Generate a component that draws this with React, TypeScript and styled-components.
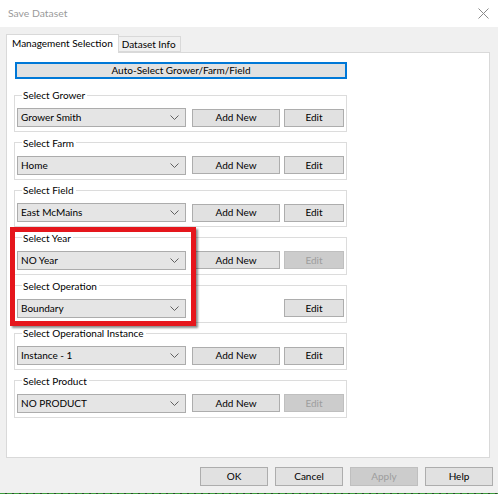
import styled, { createGlobalStyle } from 'styled-components';

const GlobalStyle = createGlobalStyle`
  html, body {
    margin: 0;
    padding: 0;
    background: #ffffff;
  }
  body {
    font-family: Lato, "Noto Sans", "Liberation Sans", sans-serif;
    font-size: 10px;
    color: #000;
  }
`;

type Group = {
  label: string;
  value: string;
  addNew: boolean;
  editEnabled: boolean;
};

const groups: Group[] = [
  { label: 'Select Grower', value: 'Grower Smith', addNew: true, editEnabled: true },
  { label: 'Select Farm', value: 'Home', addNew: true, editEnabled: true },
  { label: 'Select Field', value: 'East McMains', addNew: true, editEnabled: true },
  { label: 'Select Year', value: 'NO Year', addNew: true, editEnabled: false },
  { label: 'Select Operation', value: 'Boundary', addNew: false, editEnabled: true },
  { label: 'Select Operational Instance', value: 'Instance - 1', addNew: true, editEnabled: true },
  { label: 'Select Product', value: 'NO PRODUCT', addNew: true, editEnabled: false },
];

function Chevron() {
  return (
    <svg width="9" height="5" viewBox="0 0 9 5">
      <polyline points="0.5,0.5 4.5,4.5 8.5,0.5" fill="none" stroke="#606060" strokeWidth="1" />
    </svg>
  );
}

function CloseIcon() {
  return (
    <svg width="11" height="11" viewBox="0 0 11 11">
      <path d="M0.5 0.5 L10.5 10.5 M10.5 0.5 L0.5 10.5" stroke="#8a8a8a" strokeWidth="1" />
    </svg>
  );
}

export default function App() {
  return (
    <Window>
      <GlobalStyle />
      <TitleBar>
        <Title>Save Dataset</Title>
        <CloseIcon />
      </TitleBar>
      <Body>
        <Tabs>
          <Tab $active>Management Selection</Tab>
          <Tab>Dataset Info</Tab>
        </Tabs>
        <Panel>
          <AutoButton>Auto-Select Grower/Farm/Field</AutoButton>
          <Groups>
            {groups.map((g) => (
              <GroupBox key={g.label}>
                <Legend>{g.label}</Legend>
                <Row>
                  <Combo>
                    <span>{g.value}</span>
                    <Chevron />
                  </Combo>
                  {g.addNew && <Button $width={88}>Add New</Button>}
                  <EditButton $width={60} $disabled={!g.editEnabled}>
                    Edit
                  </EditButton>
                </Row>
              </GroupBox>
            ))}
          </Groups>
        </Panel>
        <Footer>
          <Button $width={68} $height={19}>OK</Button>
          <Button $width={68} $height={19}>Cancel</Button>
          <Button $width={68} $height={19} $disabled>Apply</Button>
          <Button $width={68} $height={19}>Help</Button>
        </Footer>
      </Body>
      <DottedEdge />
      <Highlight />
    </Window>
  );
}

const Window = styled.div`
  position: relative;
  width: 498px;
  height: 494px;
  display: flex;
  flex-direction: column;
  overflow: hidden;
`;

const TitleBar = styled.div`
  height: 27px;
  flex: none;
  background: #ffffff;
  display: flex;
  align-items: center;
  justify-content: space-between;
  padding: 0 9px 1px 8px;
  box-sizing: border-box;
`;

const Title = styled.div`
  color: #9a9a9a;
  font-size: 10.4px;
`;

const Body = styled.div`
  flex: 1;
  background: #f0f0f0;
  display: flex;
  flex-direction: column;
  padding: 7px 8px 0 6px;
`;

const Tabs = styled.div`
  display: flex;
  align-items: flex-end;
  height: 18px;
  position: relative;
  z-index: 1;
`;

const Tab = styled.div<{ $active?: boolean }>`
  box-sizing: border-box;
  height: ${(p) => (p.$active ? '19px' : '16px')};
  margin-bottom: ${(p) => (p.$active ? '-1px' : '0')};
  padding: ${(p) => (p.$active ? '1px 5px 0 5px' : '0 4px 0 3px')};
  background: ${(p) => (p.$active ? '#ffffff' : '#f0f0f0')};
  border: 1px solid #d9d9d9;
  border-bottom: ${(p) => (p.$active ? 'none' : '1px solid #d9d9d9')};
  border-left: ${(p) => (p.$active ? '1px solid #d9d9d9' : 'none')};
  white-space: nowrap;
  line-height: 15px;
`;

const Panel = styled.div`
  box-sizing: border-box;
  height: 406px;
  background: #ffffff;
  border: 1px solid #d9d9d9;
  padding: 9px 0 0 7px;
  display: flex;
  flex-direction: column;
`;

const AutoButton = styled.div`
  box-sizing: border-box;
  width: 332px;
  height: 17px;
  margin-left: 1px;
  background: #e1e1e1;
  border: 2px solid #0078d7;
  display: flex;
  align-items: center;
  justify-content: center;
  line-height: 13px;
`;

const Groups = styled.div`
  display: flex;
  flex-direction: column;
  gap: 2.67px;
  margin-top: 8px;
`;

const GroupBox = styled.fieldset`
  box-sizing: border-box;
  width: 333px;
  margin: 0;
  padding: 0 2px 4px 2px;
  border: 1px solid #dcdcdc;
  min-inline-size: 0;
`;

const Legend = styled.legend`
  margin-left: 5px;
  padding: 0 2px 0 1px;
  line-height: 16px;
  height: 16px;
`;

const Row = styled.div`
  display: flex;
  align-items: center;
  margin-top: 5px;
`;

const Combo = styled.div`
  box-sizing: border-box;
  width: 169px;
  height: 19px;
  margin-right: 6px;
  background: #e5e5e5;
  border: 1px solid #acacac;
  display: flex;
  align-items: center;
  justify-content: space-between;
  padding: 0 6px 0 3px;
  line-height: 15px;
`;

const Button = styled.div<{ $width: number; $height?: number; $disabled?: boolean }>`
  box-sizing: border-box;
  width: ${(p) => p.$width}px;
  height: ${(p) => p.$height ?? 18}px;
  background: ${(p) => (p.$disabled ? '#cccccc' : '#e1e1e1')};
  border: 1px solid ${(p) => (p.$disabled ? '#bfbfbf' : '#adadad')};
  color: ${(p) => (p.$disabled ? '#9d9d9d' : '#000000')};
  display: flex;
  align-items: center;
  justify-content: center;
  line-height: 15px;
`;

const EditButton = styled(Button)`
  margin-left: auto;
`;

const Footer = styled.div`
  display: flex;
  justify-content: flex-end;
  gap: 7px;
  margin-top: 9px;
  margin-right: -3px;
`;

const DottedEdge = styled.div`
  height: 1px;
  flex: none;
  background: repeating-linear-gradient(
    to right,
    #3c9c3c 0,
    #3c9c3c 5px,
    #2a4a2a 5px,
    #2a4a2a 7px
  );
`;

const Highlight = styled.div`
  position: absolute;
  left: 10px;
  top: 227px;
  width: 186px;
  height: 99px;
  box-sizing: border-box;
  border: 5px solid #e5161c;
  box-shadow: 2px 2px 2px rgba(0, 0, 0, 0.45);
  pointer-events: none;
`;
